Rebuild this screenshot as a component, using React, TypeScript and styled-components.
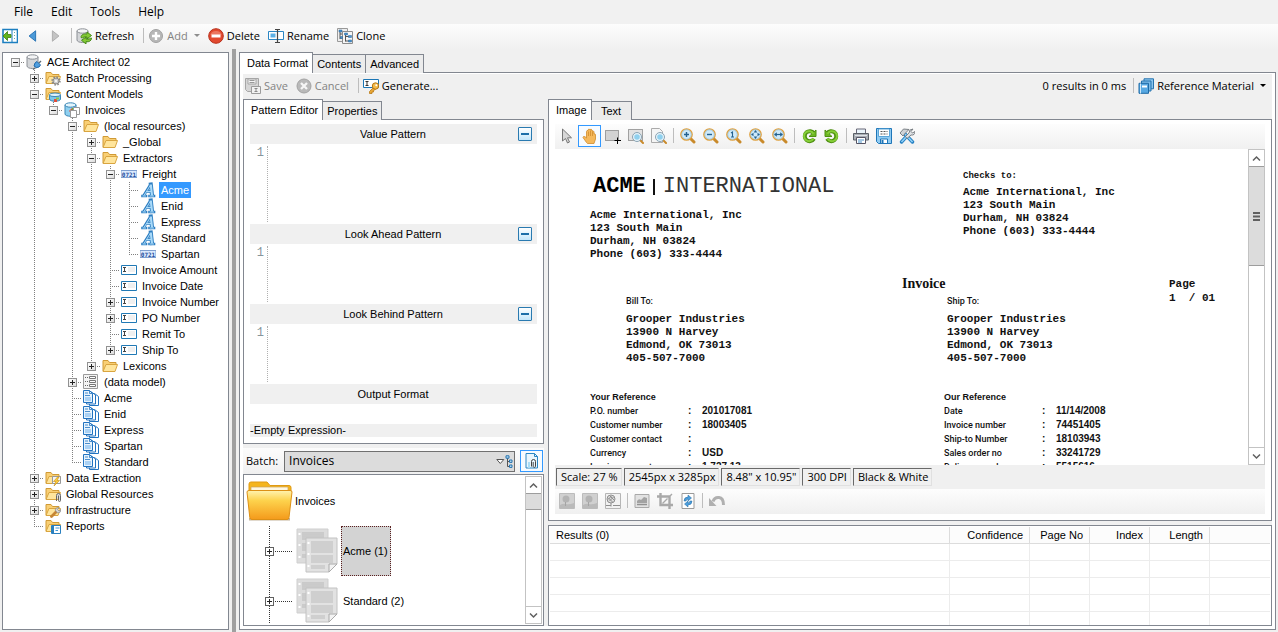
import React, { useState } from "react";
import styled, { createGlobalStyle, css } from "styled-components";

const UI = `"Open Sans", "Noto Sans", sans-serif`;
const FORM = `"Liberation Sans", Arial, sans-serif`;
const MONO = `"Liberation Mono", "Courier New", monospace`;
const EDGE = "#828790";

const GlobalStyle = createGlobalStyle`
  * { box-sizing: border-box; }
  body { margin: 0; background: #f0f0f0; color: #000; font: 11px/16px ${FORM}; }
  button, input, select, textarea { font: inherit; color: inherit; }
  svg { display: block; flex: none; }
`;

/* ---------- icons ---------- */

type IconName = keyof typeof art;

const folder = (
  <>
    <path d="M1 13V2.500h5l1.500 2H14V7" fill="#f9cf74" stroke="#d09a35" />
    <path d="M1 13.500 4 6.500h11.500L13 13.500Z" fill="#ffe59c" stroke="#d9a540" />
  </>
);
const lens = (
  <>
    <path d="m10.500 10.500 3.500 3.500" stroke="#c98a2b" strokeWidth="3" strokeLinecap="round" />
    <circle cx="6.500" cy="6.500" r="5.700" fill="#cfeafa" stroke="#e0a03c" strokeWidth="1.300" />
    <circle cx="6.500" cy="6.500" r="4.700" fill="none" stroke="#8db9d3" strokeWidth=".6" />
  </>
);
const smallLens = (
  <>
    <path d="m12.500 12.500 2.500 2.500" stroke="#c98a2b" strokeWidth="2" strokeLinecap="round" />
    <circle cx="9" cy="9" r="4.500" fill="#e8f4fa" stroke="#8aa3b3" />
    <circle cx="9" cy="9" r="2.800" fill="#8fd0ee" />
  </>
);
const cylinder = (
  <>
    <path d="M1 3v9c0 1.500 2.500 2.500 5.500 2.500S12 13.500 12 12V3" fill="#d4d6d9" stroke="#8c9096" />
    <ellipse cx="6.500" cy="3" rx="5.500" ry="2.200" fill="#f3f4f5" stroke="#8c9096" />
  </>
);
const redo = (
  <>
    <path d="M13 5.500A5 5 0 1 0 13 10.800" fill="none" stroke="#4f8f12" strokeWidth="4" />
    <path d="M8 8.500h7V2Z" fill="#6db821" stroke="#4f8f12" />
    <path d="M12.500 5.800A5 5 0 1 0 12.500 10.500" fill="none" stroke="#86cf38" strokeWidth="2" />
  </>
);

const art = {
  panel: (
    <>
      <path d="M1 1.500h14.500v13H1Z" fill="#fff" stroke="#1d7fc0" strokeWidth="1.600" />
      <path d="M10 2v12" stroke="#1d7fc0" />
      <path d="M12.500 4v9" stroke="#6aa" strokeDasharray="1 2" />
      <path d="M1 8 5.500 3.500v3H9v3H5.500v3Z" fill="#63b51c" stroke="#3d7d0d" strokeWidth=".8" />
    </>
  ),
  back: <path d="M11 2v12L3.500 8Z" fill="#4c9ad8" stroke="#1f6db0" />,
  forward: <path d="M5 2v12l7.500-6Z" fill="#c4c4c4" stroke="#a8a8a8" />,
  refresh: (
    <>
      {cylinder}
      <path d="M5 9.500c0-3 3-4 6-3.500V4l4.500 3.500L11 11V9C9 8.700 7 9 6.500 10Z" fill="#83c936" stroke="#3f8410" strokeWidth=".9" />
      <path d="M15.500 10c0 3-2.500 4.200-5.500 3.700V16L5.500 12.300 10 9v2c2 .4 4 .2 4.500-1Z" fill="#83c936" stroke="#3f8410" strokeWidth=".9" />
    </>
  ),
  add: (
    <>
      <circle cx="8" cy="8" r="6.500" fill="#b7b7b7" stroke="#a2a2a2" />
      <path d="M8 4v8M4 8h8" stroke="#fff" strokeWidth="2.400" />
    </>
  ),
  remove: (
    <>
      <circle cx="8" cy="8" r="7.300" fill="#e2492f" stroke="#b8301b" />
      <path d="M2.500 7a5.600 5 0 0 1 11 0Z" fill="#f08a75" opacity=".7" />
      <path d="M3.500 6.500h9v3h-9Z" fill="#fff" />
    </>
  ),
  rename: (
    <>
      <path d="M.5 3.500h15v8H.5Z" fill="#fff" stroke="#2a86c4" />
      <path d="M2.500 5.500h5v4h-5Z" fill="#5bb0e6" />
      <path d="M7 1.500h5M7 14.500h5M9.500 1.500v13" stroke="#444" strokeWidth="1.200" />
    </>
  ),
  clone: (
    <>
      <path d="M.5.500h10v13H.5Z" fill="#eee" stroke="#999" />
      <path d="M5.500 3.500h10v12h-10Z" fill="#f6f6f6" stroke="#8c8c8c" />
      <path d="M3 3v8M3 6h2M3 10h2M8.500 6v7.500M8.500 8.500H12M8.500 13H12" stroke="#555" />
      <path d="M2 2h3v2H2ZM7.500 5h3v2h-3ZM11.500 7.500h3v2h-3ZM11.500 12h3v2h-3ZM3.500 8.500h2v2h-2Z" fill="#4b94cf" stroke="#28669b" strokeWidth=".5" />
    </>
  ),
  saveOff: (
    <>
      <path d="M.5.500h13v13H2.500L.5 11.500Z" fill="#d6d6d6" stroke="#a6a6a6" />
      <path d="M3 1h8v5H3Z" fill="#f4f4f4" stroke="#a6a6a6" />
      <path d="M4.500 2.500h5M4.500 4.500h5" stroke="#999" />
      <path d="M6.500 8.500h9v7h-9Z" fill="#f2f2f2" stroke="#9c9c9c" />
      <path d="M9.500 10.500h3M9.500 13.500h3M11 10.500v3" stroke="#8a8a8a" />
    </>
  ),
  cancel: (
    <>
      <circle cx="8" cy="8" r="7" fill="#b9b9b9" stroke="#a3a3a3" />
      <path d="m5 5 6 6M11 5l-6 6" stroke="#f6f6f6" strokeWidth="2.300" />
    </>
  ),
  generate: (
    <>
      <path d="M.5 1.500h15v8H.5Z" fill="#fff" stroke="#1b76b5" />
      <path d="M2.500 3.500h3M2.500 7.500h3M4 3.500v4" stroke="#333" />
      <path d="m11 9-4.500 4.500v2H9V14h1.500v-1.500L13 11" fill="#e8a735" stroke="#b97a17" strokeWidth=".8" />
      <circle cx="12.500" cy="8" r="3.200" fill="#f3bb4c" stroke="#b97a17" />
      <circle cx="13.300" cy="7.200" r="1" fill="#fff" />
    </>
  ),
  books: (
    <>
      <path d="M6 .8h9.500v10H6Z" fill="#8cc6ee" stroke="#2472ae" />
      <path d="M3.500 3H13v10H3.500Z" fill="#7bbbe8" stroke="#2472ae" />
      <path d="M1 5.300h9.500v10H1Z" fill="#57a8e2" stroke="#1f6aa6" />
      <path d="M4 7.500h5v2H4Z" fill="#fff" />
      <path d="M2.500 5.500v10" stroke="#cfe8f8" />
    </>
  ),
  database: (
    <>
      {cylinder}
      <path d="m9 9 2-1.500 3.500 3.500-1.500 2Q10 14.500 8 12Z" fill="#4f9fe0" stroke="#1f69ab" />
      <path d="m13 9 2-2M9 14l-2 1.500" stroke="#5f6b75" strokeWidth="1.400" />
    </>
  ),
  folder,
  folderGear: (
    <>
      {folder}
      <circle cx="11" cy="11" r="3.700" stroke="#8a8a8a" strokeWidth="2" strokeDasharray="1.500 1.400" />
      <circle cx="11" cy="11" r="3" fill="#cfcfcf" stroke="#8a8a8a" />
      <circle cx="11" cy="11" r="1" fill="#fff" />
    </>
  ),
  folderModel: (
    <>
      {folder}
      <path d="M4.500 9v4c0 3 11 3 11 0V9Z" fill="#7cc6ea" stroke="#3b86b5" />
      <ellipse cx="10" cy="8.800" rx="5.500" ry="1.800" fill="#dff3fb" stroke="#3b86b5" />
      <path d="M9 13h3v3H9Z" fill="#e34d3a" />
      <path d="M11 11.500h3v2h-3Z" fill="#8fc94a" />
    </>
  ),
  folderBolt: (
    <>
      {folder}
      <path d="M7.500 6.500h8v7h-8Z" fill="#f5f5f5" stroke="#999" />
      <path d="m12.500 7-4 4.500h2.500L9 16l5.500-5.500H12L14 7Z" fill="#ffce3a" stroke="#c88d12" strokeWidth=".6" />
    </>
  ),
  folderClip: (
    <>
      {folder}
      <path d="M11.500 15V9.500a2 2 0 0 1 4 0v5a1 1 0 0 1-2 0V9.500" fill="#ddd" stroke="#666" />
    </>
  ),
  folderWrench: (
    <>
      {folder}
      <path d="m6.500 14.500 5-5" stroke="#c58535" strokeWidth="2.800" strokeLinecap="round" />
      <path d="M10 8q1-3 4-2.500L12.500 7.500 14 9l2-1.500Q16 11 12.500 11Z" fill="#d5d5d5" stroke="#888" strokeWidth=".7" />
    </>
  ),
  folderReport: (
    <>
      {folder}
      <path d="M6.500 7.500h9v8h-9Z" fill="#fff" stroke="#2a80bf" />
      <path d="M8 7v8.500" stroke="#2a80bf" strokeWidth="2" />
      <path d="M10.500 10h4M10.500 12.500h2.500" stroke="#3f98d8" />
    </>
  ),
  model: (
    <>
      <path d="M1 3v9c0 3 11 3 11 0V3Z" fill="#8fd0f0" stroke="#3b86b5" />
      <ellipse cx="6.500" cy="3" rx="5.500" ry="2.200" fill="#e2f4fc" stroke="#3b86b5" />
      <path d="M5 9l3-3 2 2-3 3Z" fill="#e34d3a" />
      <path d="M8 6h2v2H8Z" fill="#6fb52d" />
      <path d="M9.500 5.500h6v7h-6Z" fill="#fff" stroke="#999" />
      <path d="M6.500 8.500h6v7h-6Z" fill="#fff" stroke="#999" />
    </>
  ),
  digits: (
    <>
      <path d="M0 4.500h16v7H0Z" fill="#dceafd" stroke="#7f9fd0" />
      <text x="8" y="10.500" textAnchor="middle" fontFamily="DejaVu Sans Mono" fontWeight="700" fontSize="6" fill="#1f4f9e">0721</text>
    </>
  ),
  letter: (
    <>
      <g stroke="#2f7fc2" strokeLinecap="square">
        <path d="M4 13 10.500 2.500M6.500 9.500h5" strokeWidth="2.600" />
        <path d="M10.800 2.500 12 13" strokeWidth="4" />
        <path d="M2.500 14h3.500M9.500 14H14" strokeWidth="2.600" />
      </g>
      <g stroke="#a9daf9">
        <path d="M4 13.500 10.500 3M6.500 9.500h5" strokeWidth="1" />
        <path d="M10.800 2.500 12 13.500" strokeWidth="2.200" />
        <path d="M2.500 14h3.500M9.500 14H14" strokeWidth="1" />
      </g>
    </>
  ),
  field: (
    <>
      <path d="M.5 3.500h15v9H.5Z" fill="#fff" stroke="#2079b5" />
      <path d="M7 5h7v5H7Z" fill="#f0f0f0" />
      <path d="M2 5.500h3M2 9.500h3M3.500 5.500v4" stroke="#444" />
    </>
  ),
  dataModel: (
    <>
      <path d="M.5.500h14v14H.5Z" fill="#f4f4f4" stroke="#9b9b9b" />
      <path d="M2 3.500h3M2 7.500h3M2 11.500h3" stroke="#666" strokeDasharray="1 1" />
      <path d="M6.500 2.500h6v2h-6ZM6.500 6.500h6v2h-6ZM6.500 10.500h6v2h-6Z" fill="#fff" stroke="#777" />
    </>
  ),
  docs: (
    <>
      <path d="M6.500 3.500h5l4 3v9h-9Z" fill="#fff" stroke="#2273c0" />
      <path d="M3.500 2h5l4 3v9h-9Z" fill="#fff" stroke="#2273c0" />
      <path d="M.5.500h6l3 3v9h-9Z" fill="#e7f3fd" stroke="#2273c0" />
      <path d="M6.500.500v3h3M2 3h3M2 5.500h5" fill="none" stroke="#2273c0" strokeWidth=".8" />
      <path d="M2 7h6v4H2Z" fill="#a9d1f4" />
    </>
  ),
  pointer: <path d="M3.500 1v12l3-2.500 2 4.500 2-1-2-4.200h4Z" fill="#d7d7d7" stroke="#777" />,
  hand: (
    <path
      d="M4.500 14.500 1 9.500q0-1.500 2-.8L4.500 10V3.500q.2-1.300 1.500-1V1.800q.8-1.300 2-.2Q9.300.6 10 2v1q1.300-.7 2 .8V6q1.300-.6 1.500.8V11l-1.500 4.500H5.500ZM6.500 3.500V8M8.500 2.500V8M10.500 3.500V8"
      fill="#f5b95c"
      stroke="#d08c2c"
      strokeWidth=".8"
    />
  ),
  marquee: (
    <>
      <path d="M.5 2.500h13v10H.5Z" fill="#d2d2d2" stroke="#555" strokeDasharray="1 1" />
      <path d="M12.500 9.500V16M9.500 12.500H16" stroke="#000" />
    </>
  ),
  marqueeZoom: (
    <>
      <path d="M.5 1.500h14v11H.5Z" fill="#e2e2e2" stroke="#555" strokeDasharray="1 1" />
      {smallLens}
    </>
  ),
  pageZoom: (
    <>
      <path d="M.5.500h8l3 3v11H.5Z" fill="#f5f5f5" stroke="#aaa" />
      {smallLens}
    </>
  ),
  zoomIn: (<>{lens}<path d="M6.500 4v5M4 6.500h5" stroke="#23618f" strokeWidth="1.400" /></>),
  zoomOut: (<>{lens}<path d="M4 6.500h5" stroke="#23618f" strokeWidth="1.400" /></>),
  zoomOne: (<>{lens}<path d="M5 5 6.500 4v5M5 9h3" fill="none" stroke="#23618f" strokeWidth="1.100" /></>),
  zoomFit: (
    <>
      {lens}
      <path d="M6.500 2 8.300 4.500H4.700ZM6.500 11 4.700 8.500h3.600ZM2 6.500 4.500 4.700v3.600ZM11 6.500 8.500 8.300V4.700Z" fill="#23618f" />
    </>
  ),
  zoomWidth: (
    <>
      {lens}
      <path d="M2 6.500 4.800 4.200v4.600ZM11 6.500 8.200 4.200v4.600Z" fill="#23618f" />
      <path d="M4 6.500h5" stroke="#23618f" strokeWidth="1.200" />
    </>
  ),
  rotateLeft: redo,
  rotateRight: <g transform="matrix(-1 0 0 1 16 0)">{redo}</g>,
  print: (
    <>
      <path d="M3.500 1h9v5h-9Z" fill="#eaf4fb" stroke="#667" />
      <path d="M.5 5.500h15v6.500H.5Z" fill="#a9aeb5" stroke="#5a6068" />
      <path d="M2 7.500h12" stroke="#dfe3e8" />
      <path d="M3.500 9.500h9v6h-9Z" fill="#fff" stroke="#556" />
      <path d="M5 12h6M5 14h4" stroke="#4a91c8" />
    </>
  ),
  disk: (
    <>
      <path d="M.5.500h15v15H2.500L.5 13.500Z" fill="#8fcbf2" stroke="#1f76b8" />
      <path d="M2.500 1h11v7.500h-11Z" fill="#fff" stroke="#5aa5d8" />
      <path d="M4.500 3.500h7M4.500 6h7" stroke="#555" strokeDasharray="2 1" />
      <path d="M4.500 15v-4h7v4" fill="#fff" stroke="#1f76b8" />
      <path d="M6.500 12v3" stroke="#1f76b8" strokeWidth="2" />
    </>
  ),
  tools: (
    <>
      <path d="m6 6 7.500 8" stroke="#2580c3" strokeWidth="3.400" strokeLinecap="round" />
      <path d="m7 9-4.500 5" stroke="#2580c3" strokeWidth="3.400" strokeLinecap="round" />
      <path d="m6 6 7.500 8M7 9l-4.500 5" stroke="#8fd0f7" strokeWidth="1.600" />
      <path d="m1 5 3.500-4L10 1.500 6 5.500 4 8Z" fill="#cfd3d7" stroke="#70767c" strokeWidth=".9" />
      <path d="M6.500 8.500 10 5q0-4 4-4l-2 2.500 1.500 1.500L16 3.500Q16 7.500 12 7L8 10.500Z" fill="#dfe2e5" stroke="#70767c" strokeWidth=".9" />
    </>
  ),
  picture: (
    <>
      <path d="M.5.500h15v15H.5Z" fill="#d0d0d0" stroke="#bcbcbc" />
      <circle cx="7" cy="6" r="3.500" fill="#b3b3b3" />
      <path d="M1 12q3-2 6-1t8-1v5.500H1Z" fill="#bababa" />
      <path d="M6.500 9v4" stroke="#a4a4a4" />
    </>
  ),
  pictureMask: (
    <>
      <path d="M.5.500h15v15H.5Z" fill="#f1f1f1" stroke="#b5b5b5" />
      <circle cx="6" cy="6" r="4" fill="#ddd" stroke="#8e8e8e" />
      <path d="m3.500 5 4 4M5 3l4 4M8.500 4l-4 4M6.500 3 3 6.500M6 10v3.500M1 12.500h5M8 12.500h7" stroke="#8e8e8e" />
    </>
  ),
  levels: (
    <>
      <path d="M1 1.500h14v13H1Z" fill="#e2e2e2" stroke="#a9a9a9" />
      <path d="M3 8q2-3 4-1l3-3 3 1v5H3Z" fill="#a3a3a3" />
      <path d="M3 11.500h10" stroke="#929292" strokeWidth="1.500" />
    </>
  ),
  crop: (
    <>
      <path d="M3.500 0v12H16M0 3.500h12.500V16" fill="none" stroke="#a9a9a9" strokeWidth="2.400" />
      <path d="m5.500 10.500 5-5M15 1l-2 2" stroke="#a9a9a9" strokeWidth="1.400" />
    </>
  ),
  reload: (
    <>
      <path d="M2 .5h12v15H2Z" fill="#fff" stroke="#9a9a9a" />
      <path d="M4 8q0-4 4-4V2l3.500 3L8 8V6Q6.500 6 6 8Z" fill="#4a9ddc" stroke="#22689f" strokeWidth=".5" />
      <path d="M12 8q0 4-4 4v2l-3.500-3L8 8v2q1.500 0 2-2Z" fill="#4a9ddc" stroke="#22689f" strokeWidth=".5" />
    </>
  ),
  undo: (
    <>
      <path d="M4 8.500q1.500-4.500 6-4t4.500 7.500" fill="none" stroke="#b0b0b0" strokeWidth="3" />
      <path d="M0 5v8h7.500Z" fill="#b0b0b0" />
    </>
  ),
  pageClip: (
    <>
      <path d="M2 .5h8.500l3 3v11.500H2Z" fill="#eaf6fd" stroke="#2a86c4" />
      <path d="M10.500.500v3h3" fill="none" stroke="#2a86c4" />
      <path d="M4 9h2v6H4Z" fill="#a9dcf5" />
      <path d="M7.500 13.500v-5a2 2 0 0 1 4 0v5a1.200 1.200 0 0 1-2.300 0V9" fill="none" stroke="#444" />
    </>
  ),
};

function Icon({ name, size = 16 }: { name: IconName; size?: number }) {
  return (
    <svg width={size} height={size} viewBox="0 0 16 16" aria-hidden="true" fill="none">
      {art[name]}
    </svg>
  );
}

/* ---------- shared parts ---------- */

const Shell = styled.div`
  display: flex;
  flex-direction: column;
  height: 100vh;
  overflow: hidden;
`;

const MenuBar = styled.nav`
  display: flex;
  height: 24px;
  padding-left: 5px;
  background: #f1f1f1;
`;

const MenuItem = styled.button`
  border: 0;
  padding: 0 9px;
  background: none;
  font: 12px/24px ${UI};
`;

const ToolBar = styled.div<{ $flat?: boolean }>`
  display: flex;
  align-items: center;
  flex: none;
  height: 25px;
  padding-bottom: 2px;
  font-family: ${UI};
  background: ${(p) => (p.$flat ? "#f0f0f0" : "linear-gradient(#fdfdfd, #f0f0f0)")};
`;

const ToolButton = styled.button`
  display: flex;
  align-items: center;
  gap: 3px;
  height: 22px;
  padding: 0 6px 0 2px;
  border: 0;
  background: none;
  white-space: nowrap;
  &:disabled { color: #838383; }
`;

const IconButton = styled.button<{ $on?: boolean }>`
  display: flex;
  align-items: center;
  justify-content: center;
  width: 23px;
  height: 22px;
  padding: 0;
  border: 1px solid ${(p) => (p.$on ? "#3399ff" : "transparent")};
  background: ${(p) => (p.$on ? "#f7fbff" : "none")};
`;

const Divider = styled.span`
  width: 1px;
  height: 15px;
  margin: 0 2px 0 3px;
  background: #bdbdbd;
`;

const Caret = styled.span<{ $dim?: boolean }>`
  margin-left: 3px;
  border: 3px solid transparent;
  border-bottom: 0;
  border-top-color: ${(p) => (p.$dim ? "#8d8d8d" : "#000")};
`;

const TabStrip = styled.div`
  display: flex;
  align-items: flex-start;
  flex: none;
  height: 20px;
`;

const Tab = styled.button<{ $active?: boolean }>`
  position: relative;
  height: 19px;
  min-width: 41px;
  margin: 2px 0 0 -1px;
  padding: 0 4px;
  border: 1px solid ${EDGE};
  border-bottom-width: 0;
  background: #ececec;
  line-height: 18px;
  text-align: center;
  white-space: nowrap;
  ${(p) =>
    p.$active &&
    css`
      z-index: 1;
      height: 21px;
      margin: 0;
      padding: 0 4px 0 7px;
      background: #fff;
    `}
`;

const ScrollTrack = styled.div`
  display: flex;
  flex-direction: column;
  flex: none;
  width: 17px;
  border: 1px solid #c3c3c3;
  background: #fff;
`;

const ScrollButton = styled.button`
  display: flex;
  align-items: center;
  justify-content: center;
  flex: none;
  height: 16px;
  padding: 0;
  border: 0;
  background: #fff;
`;

const ScrollThumb = styled.div<{ $size: number }>`
  display: flex;
  align-items: center;
  justify-content: center;
  flex: none;
  height: ${(p) => p.$size}px;
  margin-bottom: auto;
  border: solid #9d9d9d;
  border-width: 1px 0;
  background: #dcdcdc;
`;

const ScrollEnd = styled.div`
  border-top: 1px solid #c3c3c3;
  display: grid;
`;

function Arrow({ up }: { up?: boolean }) {
  return (
    <svg width="9" height="7" viewBox="0 0 9 7" aria-hidden="true">
      <path d={up ? "M1 5.500 4.500 2 8 5.500" : "M1 1.500 4.500 5 8 1.500"} fill="none" stroke="#606060" strokeWidth="1.500" />
    </svg>
  );
}

function ScrollBar({ thumb, grip }: { thumb: number; grip?: boolean }) {
  return (
    <ScrollTrack>
      <ScrollButton aria-label="Scroll up"><Arrow up /></ScrollButton>
      <ScrollThumb $size={thumb}>
        {grip && (
          <svg width="7" height="9" viewBox="0 0 7 9" aria-hidden="true">
            <path d="M0 1h7M0 4.500h7M0 8h7" stroke="#606060" strokeWidth="2" />
          </svg>
        )}
      </ScrollThumb>
      <ScrollEnd>
        <ScrollButton aria-label="Scroll down"><Arrow /></ScrollButton>
      </ScrollEnd>
    </ScrollTrack>
  );
}

/* ---------- node tree ---------- */

interface Node {
  label: string;
  icon: IconName;
  open?: boolean;
  kids?: Node[];
}

const closed: Node[] = [];
const leaf = (icon: IconName, ...labels: string[]): Node[] => labels.map((label) => ({ label, icon }));

const tree: Node = {
  label: "ACE Architect 02", icon: "database", open: true, kids: [
    { label: "Batch Processing", icon: "folderGear", kids: closed },
    { label: "Content Models", icon: "folderModel", open: true, kids: [
      { label: "Invoices", icon: "model", open: true, kids: [
        { label: "(local resources)", icon: "folder", open: true, kids: [
          { label: "_Global", icon: "folder", kids: closed },
          { label: "Extractors", icon: "folder", open: true, kids: [
            { label: "Freight", icon: "digits", open: true, kids: [
              ...leaf("letter", "Acme", "Enid", "Express", "Standard"),
              ...leaf("digits", "Spartan"),
            ] },
            ...leaf("field", "Invoice Amount", "Invoice Date"),
            { label: "Invoice Number", icon: "field", kids: closed },
            { label: "PO Number", icon: "field", kids: closed },
            ...leaf("field", "Remit To"),
            { label: "Ship To", icon: "field", kids: closed },
          ] },
          { label: "Lexicons", icon: "folder", kids: closed },
        ] },
        { label: "(data model)", icon: "dataModel", kids: closed },
        ...leaf("docs", "Acme", "Enid", "Express", "Spartan", "Standard"),
      ] },
    ] },
    { label: "Data Extraction", icon: "folderBolt", kids: closed },
    { label: "Global Resources", icon: "folderClip", kids: closed },
    { label: "Infrastructure", icon: "folderWrench", kids: closed },
    { label: "Reports", icon: "folderReport" },
  ],
};

const TreePane = styled.div`
  flex: none;
  width: 227px;
  margin: 3px 3px 2px 2px;
  padding: 1px 0 0 3px;
  border: 1px solid ${EDGE};
  background: #fff;
  overflow: hidden;
`;

const TreeRow = styled.div`
  display: flex;
  align-items: center;
  height: 16px;
`;

const dotsDown = "repeating-linear-gradient(#808080 0 1px, transparent 1px 2px)";
const dotsAcross = "repeating-linear-gradient(90deg, #808080 0 1px, transparent 1px 2px)";

const Guide = styled.span<{ $line: "none" | "full" | "half"; $branch?: boolean }>`
  display: flex;
  align-items: center;
  flex: none;
  width: 19px;
  height: 16px;
  padding-left: 5px;
  background-repeat: no-repeat;
  background-image: ${(p) => `${p.$line === "none" ? "none" : dotsDown}, ${p.$branch ? dotsAcross : "none"}`};
  background-size: 1px ${(p) => (p.$line === "half" ? 8 : 16)}px, 10px 1px;
  background-position: 9px 0, 9px 8px;
`;

const Expander = styled.button<{ $plain?: boolean }>`
  display: flex;
  flex: none;
  width: 9px;
  height: 9px;
  padding: 0;
  border: 1px solid ${(p) => (p.$plain ? "#606060" : "#919191")};
  background: ${(p) => (p.$plain ? "#fff" : "linear-gradient(135deg, #fff, #dcdcdc)")};
`;

function ExpandMark({ open, plain }: { open?: boolean; plain?: boolean }) {
  return (
    <Expander $plain={plain} aria-label={open ? "Collapse" : "Expand"} aria-expanded={!!open}>
      <svg width="7" height="7" viewBox="0 0 7 7" aria-hidden="true">
        <path d={open ? "M1 3.500h5" : "M1 3.500h5M3.500 1v5"} stroke="#222" />
      </svg>
    </Expander>
  );
}

const RowIcon = styled.span`
  margin: 0 3px 0 1px;
`;

const NodeLabel = styled.span<{ $selected?: boolean }>`
  padding: 0 2px;
  white-space: nowrap;
  ${(p) => p.$selected && "background: #3399ff; color: #fff;"}
`;

/* trail[k] tells whether the ancestor at level k has further siblings below */
function Branch({ node, trail, last }: { node: Node; trail: boolean[]; last: boolean }) {
  const root = trail.length === 0;
  return (
    <>
      <TreeRow role="treeitem">
        {trail.map((more, i) => (
          <Guide key={i} $line={more ? "full" : "none"} />
        ))}
        <Guide $line={root ? "none" : last ? "half" : "full"} $branch>
          {node.kids && <ExpandMark open={node.open} />}
        </Guide>
        <RowIcon><Icon name={node.icon} /></RowIcon>
        <NodeLabel $selected={node.label === "Acme" && node.icon === "letter"}>{node.label}</NodeLabel>
      </TreeRow>
      {node.open && node.kids?.map((kid, i, all) => (
        <Branch key={kid.label} node={kid} trail={[...trail, !last]} last={i === all.length - 1} />
      ))}
    </>
  );
}

/* ---------- workspace ---------- */

const Body = styled.main`
  display: flex;
  flex: 1;
  min-height: 0;
`;

const Splitter = styled.div`
  flex: none;
  width: 4px;
  background: #a0a0a0;
`;

const Workspace = styled.section`
  display: flex;
  flex-direction: column;
  flex: 1;
  min-width: 0;
  padding: 3px 2px 2px 3px;
`;

const OuterPage = styled.div`
  flex: 1;
  display: flex;
  min-height: 0;
  padding: 1px 3px 3px;
  border: 1px solid ${EDGE};
  background: #fff;
`;

const Surface = styled.div`
  flex: 1;
  display: flex;
  flex-direction: column;
  min-width: 0;
  background: #f0f0f0;
`;

const ResultCount = styled.span`
  margin-left: auto;
  padding-right: 4px;
`;

const Columns = styled.div`
  display: flex;
  flex: 1;
  gap: 4px;
  min-height: 0;
`;

const LeftColumn = styled.div`
  display: flex;
  flex-direction: column;
  flex: none;
  width: 301px;
`;

const RightColumn = styled.div`
  display: flex;
  flex-direction: column;
  flex: 1;
  min-width: 0;
`;

const Page = styled.div<{ $grow?: boolean }>`
  display: flex;
  flex-direction: column;
  ${(p) => p.$grow && "flex: 1; min-height: 0;"}
  padding: 4px 6px 6px;
  border: 1px solid ${EDGE};
  background: #fff;
`;

const SectionHead = styled.h2`
  display: grid;
  grid-template-columns: 18px 1fr 19px;
  align-items: center;
  height: 20px;
  margin: 0;
  background: #f0f0f0;
  font: inherit;
  text-align: center;
`;

const FoldButton = styled.button`
  grid-column: 3;
  grid-row: 1;
  display: flex;
  align-items: center;
  justify-content: center;
  width: 14px;
  height: 14px;
  padding: 0;
  border: 1px solid #2a7ab0;
  border-radius: 1px;
  background: linear-gradient(#fff, #c3e6fa);
`;

const HeadText = styled.span`
  grid-column: 2;
  grid-row: 1;
`;

const Editor = styled.div<{ $tall?: boolean }>`
  display: flex;
  height: ${(p) => (p.$tall ? 80 : 60)}px;
  padding: 2px 0;
`;

const LineNumber = styled.span`
  width: 18px;
  padding-right: 3px;
  border-right: 1px dotted #b0b0b0;
  color: #86949a;
  font: 12px/14px ${MONO};
  text-align: right;
`;

const CodeBox = styled.textarea`
  flex: 1;
  padding: 0 4px;
  border: 0;
  outline: 0;
  resize: none;
  background: #fff;
  font: 12px/14px ${MONO};
`;

const Preview = styled.output`
  height: 13px;
  margin-top: 20px;
  background: #f0f0f0;
  line-height: 13px;
`;

function PatternSection({ title, tall }: { title: string; tall?: boolean }) {
  return (
    <>
      <SectionHead>
        <HeadText>{title}</HeadText>
        <FoldButton aria-label={`Collapse ${title}`}>
          <svg width="8" height="2" viewBox="0 0 8 2" aria-hidden="true"><path d="M0 1h8" stroke="#1c6ea8" strokeWidth="2" /></svg>
        </FoldButton>
      </SectionHead>
      <Editor $tall={tall}>
        <LineNumber>1</LineNumber>
        <CodeBox aria-label={title} spellCheck={false} />
      </Editor>
    </>
  );
}

const BatchBar = styled.div`
  display: flex;
  align-items: center;
  height: 26px;
  margin-top: 4px;
  padding: 0 1px 0 3px;
  background: linear-gradient(#fcfcfc, #f0f0f0);
  font-family: ${UI};
`;

const BatchField = styled.div`
  position: relative;
  flex: 1;
  margin: 0 5px 0 6px;
`;

const BatchSelect = styled.select`
  appearance: none;
  display: block;
  width: 100%;
  height: 21px;
  padding: 0 24px 0 4px;
  border: 1px solid #707070;
  border-radius: 0;
  background: #dcdcdc;
  font-size: 12px;
`;

const SelectMark = styled.span`
  position: absolute;
  top: 4px;
  right: 2px;
  pointer-events: none;
`;

const BatchView = styled.div`
  display: flex;
  flex: 1;
  min-height: 0;
  padding: 1px 1px 1px 2px;
  border: 1px solid ${EDGE};
  background: #fff;
  overflow: hidden;
`;

const BatchTree = styled.div`
  flex: 1;
  overflow: hidden;
`;

const BatchRow = styled.div<{ $child?: boolean }>`
  display: flex;
  align-items: center;
  gap: 2px;
  height: 50px;
  ${(p) =>
    p.$child &&
    css`
      padding-left: 19px;
      background: repeating-linear-gradient(#333 0 1px, transparent 1px 2px) 23px 0 / 1px 100% no-repeat,
        repeating-linear-gradient(90deg, #333 0 1px, transparent 1px 2px) 23px 25px / 24px 1px no-repeat;
    `}
`;

const DocSlot = styled.span`
  margin: 0 1px 0 20px;
`;

const BatchLabel = styled.span<{ $selected?: boolean }>`
  display: flex;
  align-items: center;
  height: 50px;
  padding: 0 2px 0 1px;
  border: 1px dotted transparent;
  ${(p) => p.$selected && "border-color: #5a2020; background: #d3d3d3;"}
`;

function BigFolder() {
  return (
    <svg width="47" height="40" viewBox="0 0 47 40" aria-hidden="true">
      <defs>
        <linearGradient id="front" x1="0" y1="0" x2="0" y2="1">
          <stop offset="0" stopColor="#fff3b0" />
          <stop offset=".35" stopColor="#fdd24c" />
          <stop offset="1" stopColor="#f49a1b" />
        </linearGradient>
      </defs>
      <path d="M3 37h41v2.500H3Z" fill="#8a6a3a" opacity=".5" />
      <path d="M3 10V3q0-2 2-2h16l3 3.500h19q2 0 2 2V11H3Z" fill="#f5b51c" stroke="#e09a12" />
      <path d="M5 6h37v5H5Z" fill="#fff7e0" stroke="#caa25a" strokeWidth=".7" />
      <path d="M1 11q0-1.500 2-1.500h41q2 0 2 1.500l-3 25.500q-.3 2-2 2h-35q-2 0-2.200-2Z" fill="url(#front)" stroke="#dc9016" />
    </svg>
  );
}

function GreyDocs() {
  return (
    <svg width="42" height="46" viewBox="0 0 42 46" aria-hidden="true">
      <path d="M1 1h31v34H1Z" fill="#dcdcdc" stroke="#cfcfcf" />
      <path d="M6 5h22M6 7h22M6 9h22M6 11h22M6 16h22M6 18h22M6 20h22M6 22h22M6 27h22M6 29h22" stroke="#b9b9b9" />
      <path d="M2.500 6h2M2.500 17h2M2.500 29h2" stroke="#fff" strokeWidth="2" />
      <path d="M10 10h31v26l-8 8H10Z" fill="#e2e2e2" stroke="#c2c2c2" />
      <path d="M41 36h-8v8Z" fill="#f3f3f3" stroke="#aaa" />
      <path
        d="M15 14h22M15 16h22M15 18h22M15 20h22M15 22h22M15 24h22M15 28h22M15 30h22M15 32h22M15 34h22M15 38h14M15 40h14"
        stroke="#bcbcbc"
      />
      <path d="M11.500 15h2M11.500 26h2M11.500 38h2" stroke="#fff" strokeWidth="2" />
    </svg>
  );
}

/* ---------- document viewer ---------- */

const Viewer = styled.div`
  display: flex;
  flex: 1;
  min-height: 0;
`;

const Paper = styled.article`
  flex: 1;
  min-width: 0;
  padding: 21px 0 0 35px;
  overflow: hidden;
  background: #fff;
  color: #111;
  white-space: nowrap;
`;

const PaperHead = styled.header`
  display: grid;
  grid-template-columns: 373px auto;
`;

const Brand = styled.h1`
  display: flex;
  align-items: center;
  height: 26px;
  margin: 4px 0 9px 3px;
  font: 22px/26px ${MONO};
  color: #333;
`;

const BrandBold = styled.b`
  margin-right: 8px;
  padding-right: 7px;
  border-right: 2px solid #111;
  line-height: 16px;
  color: #000;
`;

const Typed = styled.p`
  margin: 0;
  font: bold 11px/13px ${MONO};
  white-space: pre-line;
`;

const ChecksTo = styled.p`
  margin: 0 0 3px;
  font: bold 9px/13px ${MONO};
`;

const PaperMiddle = styled.section`
  display: grid;
  grid-template-columns: 312px 267px auto;
  margin-top: 16px;
`;

const BillBlock = styled.div`
  padding: 18px 0 0 36px;
`;

const ShipBlock = styled.div`
  padding: 4px 0 0 45px;
`;

const InvoiceTitle = styled.h2`
  margin: 0;
  font: bold 14px/14px "Liberation Serif", "Times New Roman", serif;
`;

const SmallCaption = styled.h3`
  margin: 0 0 6px;
  font: 500 9px/12px Roboto, ${FORM};
`;

const PageNumber = styled.p`
  margin: 0;
  font: bold 11px/14px ${MONO};
  white-space: pre;
`;

const References = styled.section`
  display: grid;
  grid-template-columns: 354px auto;
  justify-content: start;
  align-items: start;
  margin-top: 25px;
`;

const RefTable = styled.table`
  border-collapse: collapse;
  font: 500 10px/14px Roboto, ${FORM};
  caption { text-align: left; font: bold 9px/14px ${FORM}; }
  th { width: 98px; padding: 0; font-weight: inherit; font-size: 9px; text-align: left; }
  td { padding: 0; font: bold 10px/14px ${FORM}; }
  td:nth-child(2) { width: 14px; }
`;

const yours = [
  ["P.O. number", "201017081"],
  ["Customer number", "18003405"],
  ["Customer contact", ""],
  ["Currency", "USD"],
  ["Invoice amount", "1,727.13"],
];
const ours = [
  ["Date", "11/14/2008"],
  ["Invoice number", "74451405"],
  ["Ship-to Number", "18103943"],
  ["Sales order no", "33241729"],
  ["Delivery number", "5515616"],
];

function Reference({ title, rows }: { title: string; rows: string[][] }) {
  return (
    <RefTable>
      <caption>{title}</caption>
      <tbody>
        {rows.map(([name, value]) => (
          <tr key={name}><th scope="row">{name}</th><td>:</td><td>{value}</td></tr>
        ))}
      </tbody>
    </RefTable>
  );
}

const sender = "Acme International, Inc\n123 South Main\nDurham, NH 03824\nPhone (603) 333-4444";
const client = "Grooper Industries\n13900 N Harvey\nEdmond, OK 73013\n405-507-7000";

function InvoiceScan() {
  return (
    <Paper>
      <PaperHead>
        <div>
          <Brand><BrandBold>ACME</BrandBold>INTERNATIONAL</Brand>
          <Typed>{sender}</Typed>
        </div>
        <div>
          <ChecksTo>Checks to:</ChecksTo>
          <Typed>{sender}</Typed>
        </div>
      </PaperHead>
      <PaperMiddle>
        <BillBlock>
          <SmallCaption>Bill To:</SmallCaption>
          <Typed>{client}</Typed>
        </BillBlock>
        <div>
          <InvoiceTitle>Invoice</InvoiceTitle>
          <ShipBlock>
            <SmallCaption>Ship To:</SmallCaption>
            <Typed>{client}</Typed>
          </ShipBlock>
        </div>
        <PageNumber>{"Page\n1  / 01"}</PageNumber>
      </PaperMiddle>
      <References>
        <Reference title="Your Reference" rows={yours} />
        <Reference title="Our Reference" rows={ours} />
      </References>
    </Paper>
  );
}

const StatusBar = styled.div`
  display: flex;
  align-items: center;
  gap: 2px;
  flex: none;
  height: 24px;
  padding-left: 1px;
  background: #f0f0f0;
  font-family: ${UI};
`;

const StatusCell = styled.span`
  height: 18px;
  padding: 0 3px 0 4px;
  border: 1px solid #696969;
  border-right-color: #e0e0e0;
  border-bottom-color: #e0e0e0;
  white-space: nowrap;
`;

/* ---------- results ---------- */

const Results = styled.div`
  flex: none;
  height: 101px;
  margin-top: 4px;
  padding: 1px;
  border: 1px solid ${EDGE};
  background: #fff;
  overflow: hidden;
`;

const Grid = styled.table`
  width: 100%;
  table-layout: fixed;
  border-collapse: separate;
  border-spacing: 0;
  th, td { height: 17px; padding: 0; border: 0 solid #ececec; border-width: 0 1px 1px 0; }
  th { padding: 0 6px; background: #fcfcfc; border-color: #dcdcdc; font-weight: normal; line-height: 16px; text-align: right; }
  th:first-child { text-align: left; }
  th:last-child, td:last-child { border-right: 0; }
`;

const viewTools: (IconName | null)[] = [
  "pointer", "hand", "marquee", "marqueeZoom", "pageZoom", null,
  "zoomIn", "zoomOut", "zoomOne", "zoomFit", "zoomWidth", null,
  "rotateLeft", "rotateRight", null, "print", "disk", "tools",
];
const editTools: (IconName | null)[] = [
  "picture", "picture", "pictureMask", null, "levels", "crop", "reload", null, "undo",
];

function IconStrip({ items, active, onPick }: { items: (IconName | null)[]; active?: string; onPick?: (n: string) => void }) {
  return (
    <ToolBar>
      {items.map((name, i) =>
        name ? (
          <IconButton key={i} $on={name === active} aria-label={name} onClick={() => onPick?.(name)}>
            <Icon name={name} />
          </IconButton>
        ) : (
          <Divider key={i} />
        ),
      )}
    </ToolBar>
  );
}

export default function App() {
  const [tool, setTool] = useState("hand");
  return (
    <Shell>
      <GlobalStyle />
      <MenuBar>
        {["File", "Edit", "Tools", "Help"].map((m) => <MenuItem key={m}>{m}</MenuItem>)}
      </MenuBar>
      <ToolBar>
        <ToolButton aria-label="Toggle panel"><Icon name="panel" /></ToolButton>
        <ToolButton aria-label="Back"><Icon name="back" size={14} /></ToolButton>
        <ToolButton aria-label="Forward" disabled><Icon name="forward" size={14} /></ToolButton>
        <Divider />
        <ToolButton><Icon name="refresh" />Refresh</ToolButton>
        <Divider />
        <ToolButton disabled><Icon name="add" />Add<Caret $dim /></ToolButton>
        <ToolButton><Icon name="remove" />Delete</ToolButton>
        <ToolButton><Icon name="rename" />Rename</ToolButton>
        <ToolButton><Icon name="clone" />Clone</ToolButton>
      </ToolBar>
      <Body>
        <TreePane role="tree" aria-label="Nodes">
          <Branch node={tree} trail={[]} last />
        </TreePane>
        <Splitter />
        <Workspace>
          <TabStrip>
            <Tab $active>Data Format</Tab>
            <Tab>Contents</Tab>
            <Tab>Advanced</Tab>
          </TabStrip>
          <OuterPage>
            <Surface>
              <ToolBar $flat>
                <ToolButton disabled><Icon name="saveOff" />Save</ToolButton>
                <ToolButton disabled><Icon name="cancel" />Cancel</ToolButton>
                <Divider />
                <ToolButton><Icon name="generate" />Generate...</ToolButton>
                <ResultCount>0 results in 0 ms</ResultCount>
                <Divider />
                <ToolButton><Icon name="books" />Reference Material<Caret /></ToolButton>
              </ToolBar>
              <Columns>
                <LeftColumn>
                  <TabStrip>
                    <Tab $active>Pattern Editor</Tab>
                    <Tab>Properties</Tab>
                  </TabStrip>
                  <Page>
                    <PatternSection title="Value Pattern" tall />
                    <PatternSection title="Look Ahead Pattern" />
                    <PatternSection title="Look Behind Pattern" />
                    <SectionHead><HeadText>Output Format</HeadText></SectionHead>
                    <Preview>-Empty Expression-</Preview>
                  </Page>
                  <BatchBar>
                    <label htmlFor="batch">Batch:</label>
                    <BatchField>
                      <BatchSelect id="batch"><option>Invoices</option></BatchSelect>
                      <SelectMark>
                        <svg width="17" height="13" viewBox="0 0 17 13" aria-hidden="true" fill="none">
                          <path d="M.8 4.500h7L4.300 8.500Z" fill="#fff" stroke="#555" />
                          <path d="M11.500 3v8.500H14M11.500 6.500H14" stroke="#555" />
                          <path d="M10 .8h3v2.400h-3ZM13.500 5h2.500v2.400h-2.500ZM13.500 10h2.500v2.400h-2.500Z" fill="#bfe0f5" stroke="#2472ae" />
                        </svg>
                      </SelectMark>
                    </BatchField>
                    <IconButton $on aria-label="Attach batch"><Icon name="pageClip" /></IconButton>
                  </BatchBar>
                  <BatchView>
                    <BatchTree>
                      <BatchRow><BigFolder /><span>Invoices</span></BatchRow>
                      {["Acme (1)", "Standard (2)"].map((label, i) => (
                        <BatchRow key={label} $child>
                          <ExpandMark plain />
                          <DocSlot><GreyDocs /></DocSlot>
                          <BatchLabel $selected={i === 0}>{label}</BatchLabel>
                        </BatchRow>
                      ))}
                    </BatchTree>
                    <ScrollBar thumb={17} />
                  </BatchView>
                </LeftColumn>
                <RightColumn>
                  <TabStrip>
                    <Tab $active>Image</Tab>
                    <Tab>Text</Tab>
                  </TabStrip>
                  <Page $grow>
                    <IconStrip items={viewTools} active={tool} onPick={setTool} />
                    <Viewer>
                      <InvoiceScan />
                      <ScrollBar thumb={100} grip />
                    </Viewer>
                    <StatusBar>
                      {["Scale: 27 %", "2545px x 3285px", "8.48\" x 10.95\"", "300 DPI", "Black & White"].map((s) => (
                        <StatusCell key={s}>{s}</StatusCell>
                      ))}
                    </StatusBar>
                    <IconStrip items={editTools} />
                  </Page>
                  <Results>
                    <Grid>
                      <colgroup>
                        <col />
                        <col width="80" />
                        <col width="60" />
                        <col width="60" />
                        <col width="60" />
                        <col width="60" />
                      </colgroup>
                      <thead>
                        <tr><th>Results (0)</th><th>Confidence</th><th>Page No</th><th>Index</th><th>Length</th><th /></tr>
                      </thead>
                      <tbody>
                        {Array.from({ length: 5 }, (_, r) => (
                          <tr key={r}>{Array.from({ length: 6 }, (_, c) => <td key={c} />)}</tr>
                        ))}
                      </tbody>
                    </Grid>
                  </Results>
                </RightColumn>
              </Columns>
            </Surface>
          </OuterPage>
        </Workspace>
      </Body>
    </Shell>
  );
}
